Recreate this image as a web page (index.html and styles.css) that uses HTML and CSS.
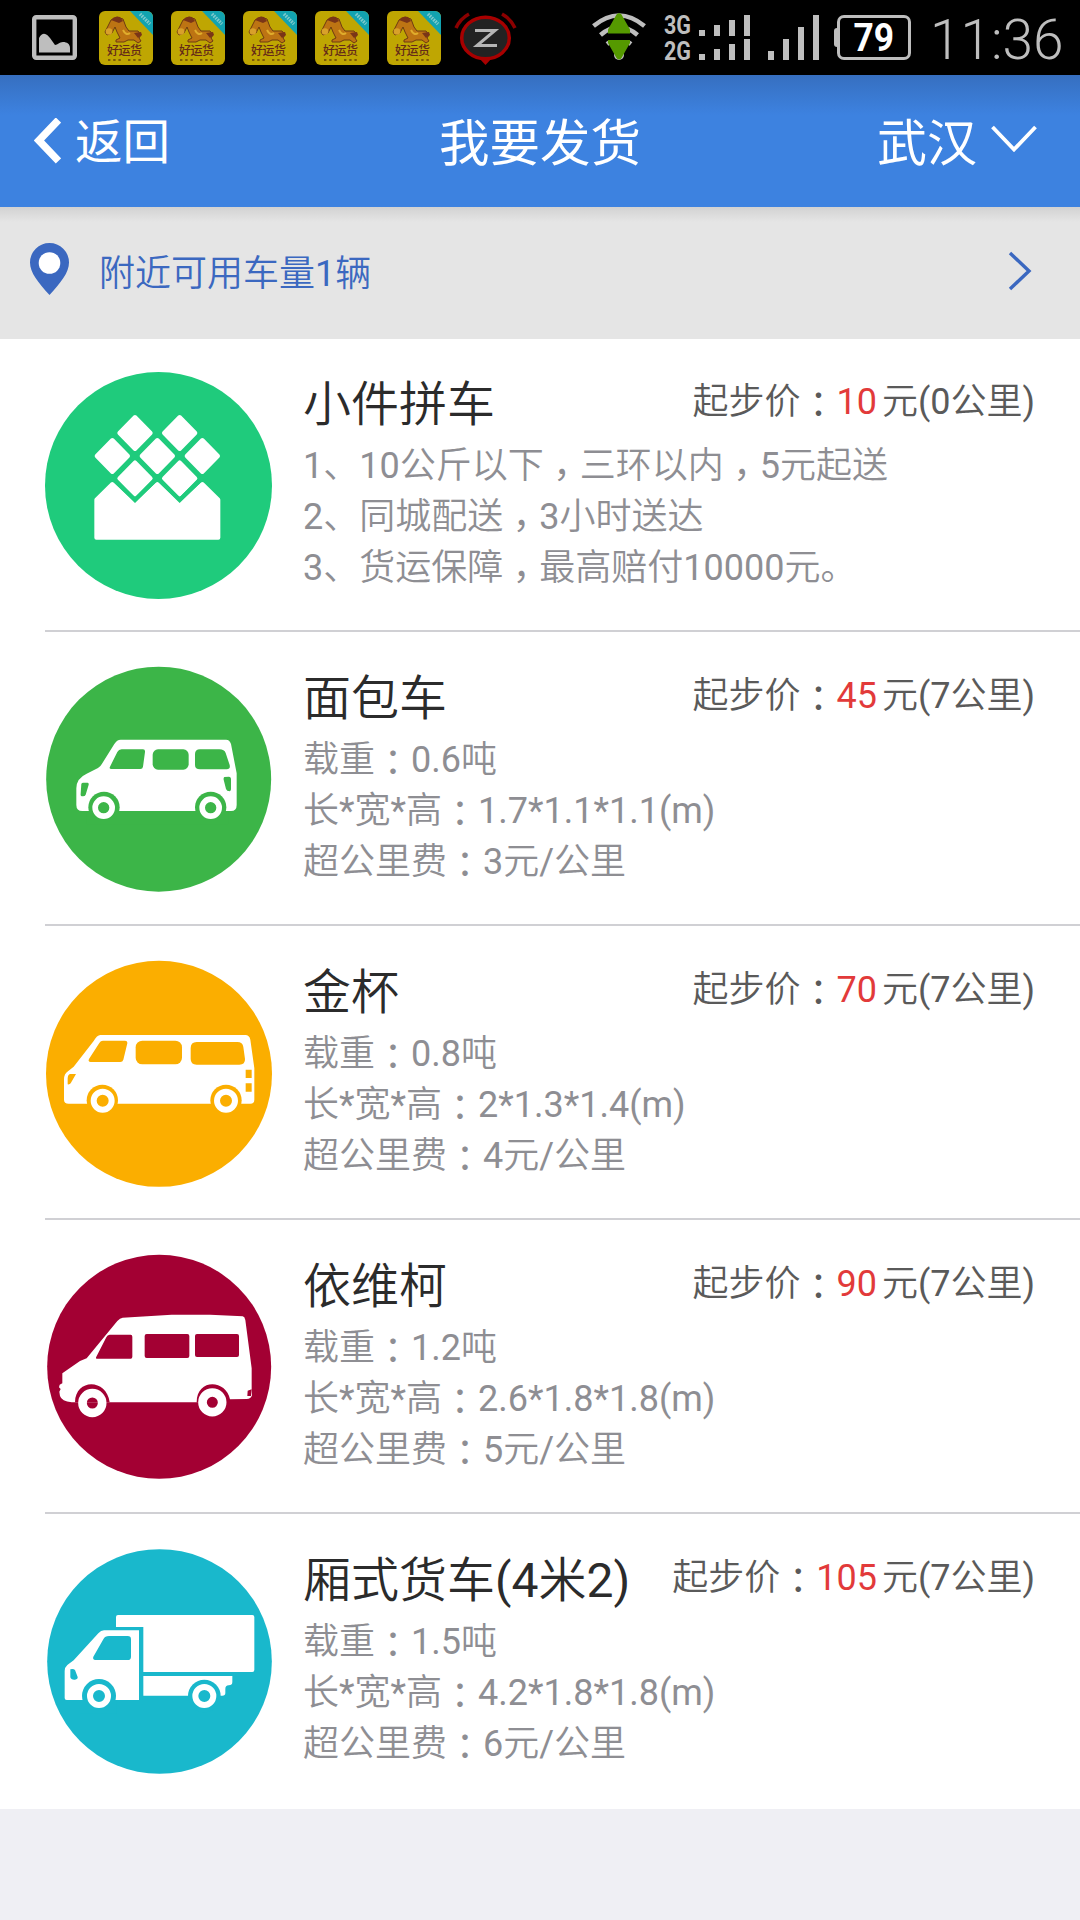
FILE: index.html
```html
<!DOCTYPE html>
<html lang="zh-CN">
<head>
<meta charset="utf-8">
<title>我要发货</title>
<link rel="stylesheet" href="styles.css">
</head>
<body>
<header class="status">
  <svg class="photo" viewBox="0 0 45 45"><rect x="2.2" y="2.2" width="40.6" height="40.6" rx="2" fill="none" stroke="#bebebe" stroke-width="4.4"/><path d="M7 37.500V23c4-8 9-3 11 0l5 7c3 0 4-3 8-3s7 2 7 6v4.500z" fill="#bebebe"/></svg>
  <svg class="app" viewBox="0 0 54 54"><g id="app">
    <rect width="54" height="54" rx="6" fill="#bfa602"/>
    <path d="M31 0h17a6 6 0 0 1 6 6v18z" fill="#12a3b0"/>
    <path d="M41 3l10 10" stroke="#7fc9cc" stroke-width="3.500" stroke-dasharray="1.600 1"/>
    <path d="M12 9l6-3 6 2 3 8 3 4 9 0 3 4-2 3 2 3-3 2-4-3-6 0-4 2-8 0 0-2 4-2-3-6-2-5-3 6-5 2-2-3z" fill="#bd7413" stroke="#6e3b12" stroke-width="1"/>
    <circle cx="10" cy="20.500" r="3.300" fill="#d8a12a"/>
    <path d="M24 19q3 6 7 3" fill="none" stroke="#e0ad2c" stroke-width="2"/>
    <path d="M12 9c2-3 5-4 9-3l3 4-4 2zM35 22l7-1 1 3-4 3z" fill="#7a3517"/>
    <path d="M9 49h14M29 49h14" stroke="#7c5a08" stroke-width="2" stroke-dasharray="2.4 2.8"/>
    <text x="8" y="44" font-size="12" textLength="35" class="app-name">好运货</text>
  </g></svg>
  <svg class="app" viewBox="0 0 54 54"><use href="#app"/></svg>
  <svg class="app" viewBox="0 0 54 54"><use href="#app"/></svg>
  <svg class="app" viewBox="0 0 54 54"><use href="#app"/></svg>
  <svg class="app" viewBox="0 0 54 54"><use href="#app"/></svg>
  <svg class="alarm" viewBox="0 0 64 54"><path d="M25 47h13l-6.500 7z" fill="#a80000"/><ellipse cx="31.500" cy="27" rx="23.800" ry="20.800" fill="#222" stroke="#a80000" stroke-width="3.500"/><path d="M2 17Q6 8 15 3M61 17Q57 8 48 3" fill="none" stroke="#8c0000" stroke-width="3.500"/><path d="M21 19.500H41L23 34.500H43" fill="none" stroke="#b5b5b5" stroke-width="3"/></svg>
  <svg class="wifi" viewBox="0 0 54 48"><g fill="none" stroke="#bebebe" stroke-width="4.500"><path d="M1.500 13Q27-8 52.500 13M8.500 22Q27 6 45.500 22M15 31Q27 22 39 31"/></g><circle cx="27" cy="42" r="5" fill="#bebebe"/><path d="M15 20h24v7H15z"/><path d="M24.500 1.500q2.500-3 5 0l8.500 15v4H16v-4zM16 27h22v3l-8.500 15q-2.500 3-5 0L16 30z" fill="#559900"/></svg>
  <div class="nets"><span>3G</span><span>2G</span></div>
  <svg class="dual" viewBox="0 0 51 45"><path d="M0 15h6v6H0zM15 10h6v11h-6zM30 5h6v16h-6zM45 0h6v21h-6zM0 39h6v6H0zM15 34h6v11h-6zM30 29h6v16h-6zM45 24h6v21h-6z" fill="#bebebe"/></svg>
  <svg class="bars" viewBox="0 0 51 45"><path d="M0 36h6v9H0zM15 24h6v21h-6zM30 12h6v33h-6zM45 0h6v45h-6z" fill="#bebebe"/></svg>
  <div class="battery"><span>79</span></div>
  <div class="clock">11:36</div>
</header>

<nav class="nav">
  <a class="back"><svg width="27" height="46" viewBox="0 0 27 46"><path d="M24.500 2L5 22.500L24.500 43" fill="none" stroke="#fff" stroke-width="7.500"/></svg>返回</a>
  <h1>我要发货</h1>
  <a class="city">武汉<svg width="46" height="30" viewBox="0 0 46 30"><path d="M1.500 2L23 24.500L44.500 2" fill="none" stroke="#fff" stroke-width="3.800"/></svg></a>
</nav>

<section class="nearby">
  <svg width="39" height="52" viewBox="0 0 39 52"><path d="M19.500 0a19.500 19.500 0 0 1 19.500 19.500c0 10-8 20-19.500 32.500C8 39.500 0 29.500 0 19.500A19.500 19.500 0 0 1 19.500 0z" fill="#3b68c0"/><circle cx="19.500" cy="20" r="10.800" fill="#fff"/></svg>
  <span class="near-text">附近可用车量1辆</span>
  <svg width="24" height="40" viewBox="0 0 24 40"><path d="M2 2L21 20L2 38" fill="none" stroke="#3b68c0" stroke-width="3.400"/></svg>
</section>

<main class="list">
  <article class="item">
    <svg class="icon" viewBox="45 66 684 684"><circle cx="385.500" cy="406.500" r="340.500" fill="#1fcb7c"/>
      <g fill="#fff" stroke="#fff" stroke-width="12" stroke-linejoin="round"><path d="M315 201l47 48-47 48-47-48zM449 201l47 48-47 48-47-48zM247 270l47 48-47 48-47-48zM382 270l47 48-47 48-47-48zM517 270l47 48-47 48-47-48zM315 337l47 48-47 48-47-48zM449 337l47 48-47 48-47-48z"/><path d="M199 449L247 402L315 465L382 402L449 465L517 402L565 449V563H199z"/></g>
      <path d="M247 384L315 450L382 384L449 450L517 384" fill="none" stroke="#1fcb7c" stroke-width="13"/></svg>
    <div class="body">
      <div class="head"><h2>小件拼车</h2><p class="price">起步价<i class="colon" lang="zh-TW">：</i><b>10</b>元(0公里)</p></div>
      <p>1、10公斤以下<i class="comma" lang="zh-TW">，</i>三环以内<i class="comma" lang="zh-TW">，</i>5元起送</p>
      <p>2、同城配送<i class="comma" lang="zh-TW">，</i>3小时送达</p>
      <p>3、货运保障<i class="comma" lang="zh-TW">，</i>最高赔付10000元。</p>
    </div>
  </article>

  <article class="item">
    <svg class="icon" viewBox="45 48 684 684"><g fill="#3cb548"><circle cx="386" cy="387.500" r="337.500"/>
      <path fill="#fff" d="M272 269H588Q599 269 603 282L620 370V465Q620 483 603 483H157Q139 483 139 465V415Q139 385 170 371L204 354Q211 350 216 341L253 282Q261 269 272 269z"/>
      <path d="M275 298H339Q346 298 345 306L339 350Q338 357 331 357H245Q236 357 240 350L262 306Q266 298 275 298zM495 312Q495 298 510 298H568Q583 298 587 309L599 345Q602 358 590 358H510Q495 358 495 345zM154 402Q155 398 160 398H173Q177 399 176 404L167 434Q165 439 159 439H155Q151 438 152 431zM583 381Q580 383 581 389L588 417Q590 424 599 424Q603 423 603 418V386Q602 380 597 380z"/><rect x="368" y="298" width="108" height="61" rx="16"/>
      <circle cx="222" cy="472" r="47"/><circle cx="542" cy="472" r="47"/><path d="M170 483h425v40H170z"/></g>
      <g fill="none" stroke="#fff" stroke-width="17"><circle cx="221" cy="473" r="25.500"/><circle cx="542" cy="473" r="25.500"/></g></svg>
    <div class="body">
      <div class="head"><h2>面包车</h2><p class="price">起步价<i class="colon" lang="zh-TW">：</i><b>45</b>元(7公里)</p></div>
      <p>载重<i class="colon" lang="zh-TW">：</i>0.6吨</p>
      <p>长*宽*高<i class="colon" lang="zh-TW">：</i>1.7*1.1*1.1(m)</p>
      <p>超公里费<i class="colon" lang="zh-TW">：</i>3元/公里</p>
    </div>
  </article>

  <article class="item">
    <svg class="icon" viewBox="45 45 684 684"><g fill="#fbae00"><circle cx="387" cy="386.500" r="339"/>
      <path fill="#fff" d="M211 270H646Q658 270 661 284L673 370V464Q673 476 661 476H116Q102 476 102 464V403Q102 387 114 379L131 365L191 288Q201 270 211 270z"/>
      <path d="M219 287H285Q293 288 292 295L280 344Q278 351 271 351H182Q173 350 177 342L206 297Q211 287 219 287zM500 291H622Q638 291 640 306L645 342Q646 359 628 359H500Q482 359 482 342V309Q482 291 500 291zM120 387H138L122 415Q119 419 113 418V400Q114 388 120 387zM647 374h18v25h-18zM647 415h18v25h-18z"/><rect x="317" y="287" width="139" height="71" rx="20"/>
      <circle cx="217" cy="466" r="47"/><circle cx="588" cy="466" r="47"/><path d="M160 477h485v40H160z"/></g>
      <g fill="none" stroke="#fff" stroke-width="18"><circle cx="218" cy="467" r="27"/><circle cx="588" cy="467" r="27"/></g></svg>
    <div class="body">
      <div class="head"><h2>金杯</h2><p class="price">起步价<i class="colon" lang="zh-TW">：</i><b>70</b>元(7公里)</p></div>
      <p>载重<i class="colon" lang="zh-TW">：</i>0.8吨</p>
      <p>长*宽*高<i class="colon" lang="zh-TW">：</i>2*1.3*1.4(m)</p>
      <p>超公里费<i class="colon" lang="zh-TW">：</i>4元/公里</p>
    </div>
  </article>

  <article class="item">
    <svg class="icon" viewBox="45 42 684 684"><g fill="#a30033"><circle cx="387.500" cy="380.500" r="336"/>
      <path fill="#fff" d="M278 233L425 224H540L638 229Q644 230 646 240L665 385V450L666 466Q663 477 650 477L600 478L500 487H125Q95 484 90 468L88 455L92 447L87 442L89 434L97 430V400L150 363L170 355L262 243Q270 234 278 233z"/>
      <path d="M239 284H302Q307 284 307 290V350Q307 356 302 356H203Q195 356 199 350L229 292Q232 284 239 284zM653 452l12-4-2 20h-11z"/><rect x="344" y="282" width="134" height="72" rx="6"/><rect x="495" y="282" width="132" height="69" rx="6"/>
      <path d="M135 487C136 415 230 415 239 487zM500 487C500 415 588 418 600 478V490z"/></g>
      <g fill="none" stroke="#fff" stroke-width="26"><circle cx="187" cy="489" r="29.500"/><circle cx="547" cy="487" r="29.500"/></g></svg>
    <div class="body">
      <div class="head"><h2>依维柯</h2><p class="price">起步价<i class="colon" lang="zh-TW">：</i><b>90</b>元(7公里)</p></div>
      <p>载重<i class="colon" lang="zh-TW">：</i>1.2吨</p>
      <p>长*宽*高<i class="colon" lang="zh-TW">：</i>2.6*1.8*1.8(m)</p>
      <p>超公里费<i class="colon" lang="zh-TW">：</i>5元/公里</p>
    </div>
  </article>

  <article class="item">
    <svg class="icon" viewBox="45 39 684 684"><g fill="#19b8cc"><circle cx="388.500" cy="379.500" r="337"/>
      <path fill="#fff" d="M264 240H667Q673 240 673 246V405Q673 411 667 411H340V276H258V246Q258 240 264 240zM222 286H327V495H110Q104 495 104 489V408Q104 397 112 390L131 376L205 295Q213 286 222 286zM340 423H607V441Q607 451 596 451Q586 451 586 462V474Q586 482 577 482H340z"/>
      <path d="M237 303H293Q303 303 303 313V365Q303 375 293 375H196Q187 374 190 365L220 313Q225 303 237 303zM121 403Q130 400 135 405L143 426Q144 433 135 434Q123 435 121 427z"/>
      <circle cx="207" cy="483" r="51"/><circle cx="523" cy="483" r="49"/><path d="M150 495h110v40H150z"/></g>
      <g fill="none" stroke="#fff" stroke-width="18"><circle cx="207" cy="483" r="27"/><circle cx="523" cy="483" r="27"/></g></svg>
    <div class="body">
      <div class="head"><h2>厢式货车(4米2)</h2><p class="price">起步价<i class="colon" lang="zh-TW">：</i><b>105</b>元(7公里)</p></div>
      <p>载重<i class="colon" lang="zh-TW">：</i>1.5吨</p>
      <p>长*宽*高<i class="colon" lang="zh-TW">：</i>4.2*1.8*1.8(m)</p>
      <p>超公里费<i class="colon" lang="zh-TW">：</i>6元/公里</p>
    </div>
  </article>
</main>
</body>
</html>
```
FILE: styles.css
```css
* { box-sizing: border-box; margin: 0; padding: 0; }
body {
  width: 1080px;
  min-height: 1920px;
  background: #efeff4;
  font-family: Roboto, "Noto Sans CJK SC DemiLight", "Noto Sans CJK SC", sans-serif;
  font-weight: 400;
}
svg { display: block; flex: none; }

.status {
  display: flex;
  height: 75px;
  background: #000;
  color: #bebebe;
  padding: 11px 0 0 32px;
}
.photo { width: 45px; height: 45px; margin: 4px 22px 0 0; }
.app { width: 54px; height: 54px; margin-right: 18px; }
.app-name { fill: #652a18; font-family: "Noto Sans CJK SC", sans-serif; font-weight: 500; }
.alarm { width: 64px; height: 54px; margin-left: -5px; }
.wifi { width: 54px; height: 48px; margin: 2px 18px 0 74px; }
.nets {
  width: 35px;
  padding-top: 2px;
  font: 700 25px/26px Roboto, sans-serif;
}
.nets span { display: block; transform: scaleX(.86); transform-origin: left; }
.dual { width: 51px; height: 45px; margin: 4px 18px 0 0; }
.bars { width: 51px; height: 45px; margin: 4px 18px 0 0; }
.battery {
  position: relative;
  width: 74px;
  height: 45px;
  margin-top: 4px;
  border: 3px solid #bebebe;
  border-radius: 7px;
  color: #fff;
  font: 700 38px/40px Roboto, sans-serif;
  text-align: center;
}
.battery span { display: inline-block; transform: scaleX(.93); }
.battery::before {
  content: "";
  position: absolute;
  left: -6px;
  top: 10px;
  width: 4px;
  height: 19px;
  border-radius: 3px 0 0 3px;
  background: #bebebe;
}
.clock { margin: 1px 0 0 19px; font-size: 55px; font-weight: 300; line-height: 56px; white-space: nowrap; }

.nav {
  display: grid;
  grid-template-columns: 1fr auto 1fr;
  align-items: center;
  height: 132px;
  padding: 0 43px 5px;
  background: linear-gradient(#366fc0, #3d82e0 40px);
  color: #fff;
  font-family: "Noto Sans CJK SC", sans-serif;
  font-size: 50px;
}
.nav h1 { font-size: 50.5px; font-weight: 400; }
.nav svg { margin-top: 4px; }
.back { display: flex; align-items: center; gap: 14px; margin-left: -9px; font-size: 47.5px; }
.city { display: flex; align-items: center; justify-content: flex-end; gap: 14px; }
.city svg { margin-top: 3px; }

.nearby {
  display: flex;
  align-items: center;
  height: 132px;
  padding: 0 48px 8px 30px;
  background: linear-gradient(#d2d2d2, #e5e5e5 15px);
  color: #3b68c0;
  font-size: 36px;
}
.near-text { flex: 1; margin: 2px 0 0 30px; }
.nearby svg:last-child { margin-top: 4px; }

.list { padding-left: 45px; background: #fff; }
.item {
  display: flex;
  height: 293px;
  margin-bottom: 1px;
  padding: 33px 45px 0 0;
  border-bottom: 2px solid #d0d0d4;
}
.item:last-child { height: 294px; margin-bottom: 0; border-bottom: 0; }
.icon { width: 228px; height: 228px; }
.body { flex: 1; margin: 1px 0 0 30px; color: #8e8e93; font-size: 36px; line-height: 51px; }
.head { display: flex; justify-content: space-between; height: 68px; }
h2 { color: #2b2b2b; font-size: 48px; font-weight: 400; line-height: 64px; }
.price { color: #5a5a5a; line-height: 59px; }
.price b { margin-right: 5px; color: #e23a3a; font-weight: 400; }
i { font-family: "Noto Sans CJK TC", sans-serif; font-style: normal; line-height: 0; }
.colon { vertical-align: -4px; }
.comma { vertical-align: -10px; }
```
